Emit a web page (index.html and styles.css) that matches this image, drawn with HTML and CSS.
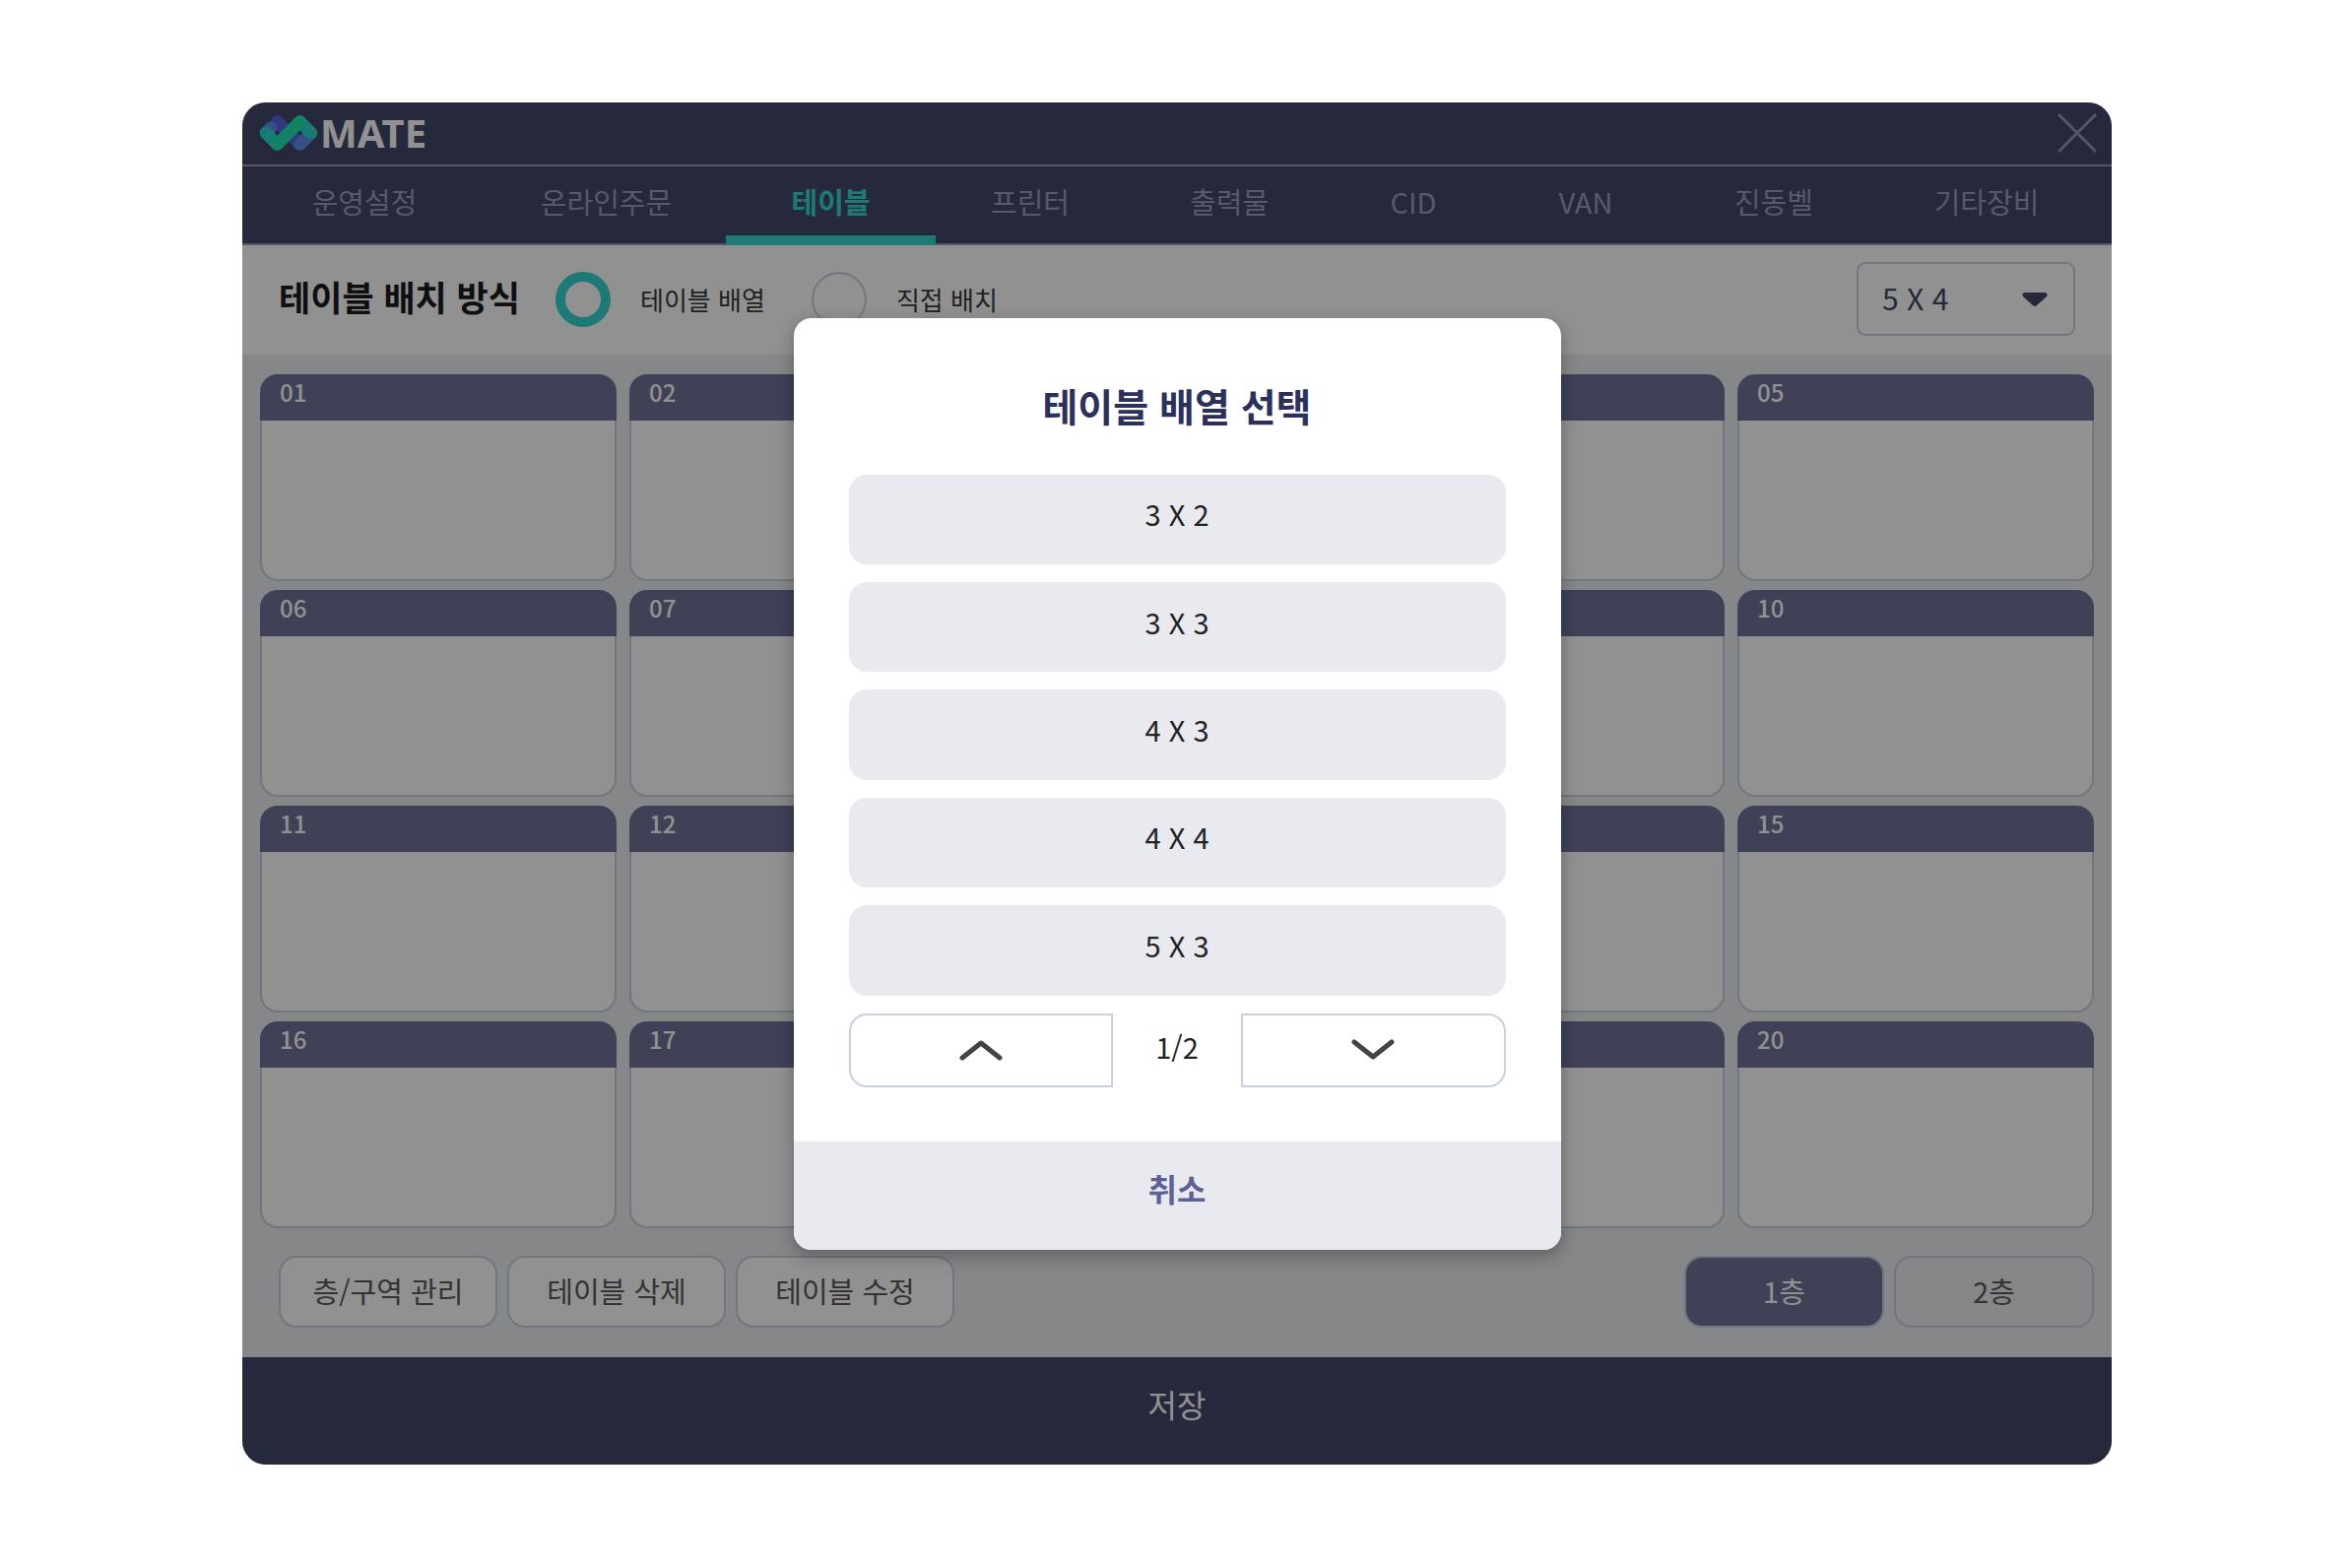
FILE: index.html
```html
<!DOCTYPE html>
<html lang="ko">
<head>
<meta charset="utf-8">
<meta name="viewport" content="width=device-width, initial-scale=1">
<title>MATE</title>
<link rel="stylesheet" href="styles.css">
</head>
<body>
<div class="app">
  <header class="topbar">
    <div class="brand">
      <svg class="brand-mark" viewBox="0 0 60 36" width="60" height="36" fill="none" stroke-width="12.500" stroke-linecap="round" stroke-linejoin="round" aria-hidden="true">
        <path stroke="#5565dd" d="M18.500 6.500 41.500 29.500"/>
        <path stroke="#5d8fee" d="M7 18 12 12.500M41.500 29.500 53 18"/>
        <path stroke="#25d8cc" d="M7 18 18.500 29.500M41.500 6.500 53 18"/>
        <path stroke="#23e5b0" d="M18.500 29.500 41.500 6.500"/>
      </svg>
      <span class="brand-name">MATE</span>
    </div>
    <button class="close" type="button" aria-label="닫기">
      <svg viewBox="0 0 40 40" width="40" height="40" fill="none" stroke="currentColor" stroke-width="3" stroke-linecap="round"><path d="M2 2 38 38M38 2 2 38"/></svg>
    </button>
  </header>
  <nav class="tabs">
    <a class="tab" href="#">운영설정</a>
    <a class="tab" href="#">온라인주문</a>
    <a class="tab tab-active" href="#" aria-current="page">테이블</a>
    <a class="tab" href="#">프린터</a>
    <a class="tab" href="#">출력물</a>
    <a class="tab" href="#">CID</a>
    <a class="tab" href="#">VAN</a>
    <a class="tab" href="#">진동벨</a>
    <a class="tab" href="#">기타장비</a>
  </nav>
  <section class="toolbar">
    <h1 class="toolbar-title">테이블 배치 방식</h1>
    <input class="radio" type="radio" name="layout" id="layout-grid" checked>
    <label class="radio-label" for="layout-grid">테이블 배열</label>
    <input class="radio" type="radio" name="layout" id="layout-free">
    <label class="radio-label" for="layout-free">직접 배치</label>
    <div class="picker">
      <select class="picker-select" aria-label="테이블 배열">
        <option>5 X 4</option>
      </select>
      <svg class="picker-arrow" viewBox="0 0 26 14" width="26" height="14" aria-hidden="true"><path fill="#444869" d="M3 0H23C25.500 0 26.500 2.500 24.500 4.500L15 13C13.800 14.200 12.200 14.200 11 13L1.500 4.500C-.5 2.500 .5 0 3 0Z"/></svg>
    </div>
  </section>
  <main class="floor">
    <div class="tables">
      <article class="seat"><h2 class="seat-no">01</h2></article>
      <article class="seat"><h2 class="seat-no">02</h2></article>
      <article class="seat"><h2 class="seat-no">03</h2></article>
      <article class="seat"><h2 class="seat-no">04</h2></article>
      <article class="seat"><h2 class="seat-no">05</h2></article>
      <article class="seat"><h2 class="seat-no">06</h2></article>
      <article class="seat"><h2 class="seat-no">07</h2></article>
      <article class="seat"><h2 class="seat-no">08</h2></article>
      <article class="seat"><h2 class="seat-no">09</h2></article>
      <article class="seat"><h2 class="seat-no">10</h2></article>
      <article class="seat"><h2 class="seat-no">11</h2></article>
      <article class="seat"><h2 class="seat-no">12</h2></article>
      <article class="seat"><h2 class="seat-no">13</h2></article>
      <article class="seat"><h2 class="seat-no">14</h2></article>
      <article class="seat"><h2 class="seat-no">15</h2></article>
      <article class="seat"><h2 class="seat-no">16</h2></article>
      <article class="seat"><h2 class="seat-no">17</h2></article>
      <article class="seat"><h2 class="seat-no">18</h2></article>
      <article class="seat"><h2 class="seat-no">19</h2></article>
      <article class="seat"><h2 class="seat-no">20</h2></article>
    </div>
    <div class="actions">
      <button class="action" type="button">층/구역 관리</button>
      <button class="action" type="button">테이블 삭제</button>
      <button class="action" type="button">테이블 수정</button>
      <div class="levels">
        <button class="level level-active" type="button">1층</button>
        <button class="level" type="button">2층</button>
      </div>
    </div>
  </main>
  <button class="save" type="button">저장</button>

  <div class="overlay">
    <div class="dialog" role="dialog" aria-modal="true" aria-labelledby="dialog-title">
      <h2 class="dialog-title" id="dialog-title">테이블 배열 선택</h2>
      <div class="choices">
        <button class="choice" type="button">3 X 2</button>
        <button class="choice" type="button">3 X 3</button>
        <button class="choice" type="button">4 X 3</button>
        <button class="choice" type="button">4 X 4</button>
        <button class="choice" type="button">5 X 3</button>
      </div>
      <div class="pager">
        <button class="page page-prev" type="button" aria-label="이전">
          <svg viewBox="0 0 44 22" width="44" height="22" fill="none" stroke="#444" stroke-width="5" stroke-linecap="round" stroke-linejoin="round"><path d="M3 19 22 4 41 19"/></svg>
        </button>
        <span class="page-count">1/2</span>
        <button class="page page-next" type="button" aria-label="다음">
          <svg viewBox="0 0 44 22" width="44" height="22" fill="none" stroke="#444" stroke-width="5" stroke-linecap="round" stroke-linejoin="round"><path d="M3 3 22 18 41 3"/></svg>
        </button>
      </div>
      <button class="cancel" type="button">취소</button>
    </div>
  </div>
</div>
</body>
</html>
```
FILE: styles.css
```css
:root {
  --navy: #444869;
  --violet: #6f729a;
  --line: #c9d0e2;
  --rule: #9299bb;
  --teal: #35d6cf;
  --mist: #e9eaef;
}

* {
  box-sizing: border-box;
}

body {
  margin: 0;
  padding: 104px 244px 104px 246px;
  background: #fff;
  font-family: "Noto Sans CJK KR", sans-serif;
  font-size: 29px;
}

h1,
h2 {
  margin: 0;
}

button,
select {
  padding: 0;
  border: 0;
  background: none;
  color: inherit;
  font: inherit;
  line-height: 44px;
}

svg {
  display: block;
}

.app {
  position: relative;
  display: flex;
  flex-direction: column;
  overflow: hidden;
  border-radius: 24px;
  background: #ebedf0;
}

.topbar {
  display: flex;
  align-items: center;
  justify-content: space-between;
  height: 65px;
  padding: 0 15px 2px 17px;
  border-bottom: 2px solid var(--rule);
  background: var(--navy);
}

.brand {
  display: flex;
  align-items: center;
  gap: 2px;
}

.brand-name {
  color: #fff;
  font-family: "Noto Sans", sans-serif;
  font-size: 40px;
  font-weight: 700;
  line-height: 44px;
}

.close {
  color: var(--rule);
}

.tabs {
  display: grid;
  grid-template-columns: 248fr 243fr 213fr 192fr 212fr 162fr 188fr 194fr 238fr;
  height: 80px;
  padding-right: 8px;
  background: var(--navy);
  box-shadow: inset 0 -2px var(--rule);
}

.tab {
  display: flex;
  align-items: center;
  justify-content: center;
  padding-bottom: 11px;
  color: #979eb9;
  line-height: 44px;
  text-decoration: none;
}

.tab-active {
  color: var(--teal);
  font-weight: 700;
  box-shadow: inset 0 -10px var(--teal);
}

.toolbar {
  display: flex;
  align-items: center;
  height: 111px;
  padding: 0 37px 2px;
  background: #fff;
}

.toolbar-title {
  margin-right: 36px;
  padding-bottom: 6px;
  color: #1c1c1c;
  font-size: 35px;
  line-height: 52px;
}

.radio {
  appearance: none;
  width: 56px;
  height: 56px;
  margin: 0 30px 0 0;
  border: 2px solid var(--line);
  border-radius: 50%;
  background: #fff;
}

.radio:checked {
  border: 10px solid var(--teal);
}

.radio-label {
  margin-right: 47px;
  color: #3a3a3a;
  font-size: 26px;
  line-height: 40px;
}

.picker {
  display: grid;
  align-items: center;
  width: 222px;
  height: 75px;
  margin-left: auto;
}

.picker-select,
.picker-arrow {
  grid-area: 1 / 1;
}

.picker-select {
  appearance: none;
  width: 100%;
  height: 100%;
  padding: 0 64px 4px 24px;
  border: 2px solid var(--line);
  border-radius: 9px;
  color: var(--navy);
  font-size: 30px;
}

.picker-arrow {
  justify-self: end;
  margin-right: 28px;
  pointer-events: none;
}

.floor {
  padding: 20px 18px 30px;
}

.tables {
  display: grid;
  grid-template-columns: repeat(5, 1fr);
  gap: 9px 13px;
}

.seat {
  height: 210px;
  border: 2px solid var(--line);
  border-top: 0;
  border-radius: 18px;
  background: #fff;
}

.seat-no {
  height: 47px;
  margin: 0 -2px;
  padding-left: 20px;
  border-radius: 18px 18px 0 0;
  background: var(--violet);
  color: #fff;
  font-size: 24px;
  font-weight: 500;
  line-height: 36px;
}

.actions {
  display: flex;
  gap: 10px;
  margin-top: 28px;
  padding-left: 19px;
}

.action,
.level {
  height: 73px;
  padding-bottom: 4px;
  border: 2px solid var(--line);
  border-radius: 18px;
  color: #5a5a5a;
}

.action {
  width: 222px;
  background: #fff;
}

.levels {
  display: flex;
  gap: 10px;
  margin-left: auto;
}

.level {
  width: 203px;
}

.level-active {
  background: var(--violet);
  color: #fff;
}

.save {
  height: 109px;
  padding-bottom: 16px;
  background: var(--navy);
  color: #fff;
  font-size: 32px;
}

.overlay {
  position: absolute;
  inset: 0;
  display: flex;
  align-items: center;
  justify-content: center;
  background: rgba(0, 0, 0, 0.43);
}

.dialog {
  display: flex;
  flex-direction: column;
  width: 779px;
  overflow: hidden;
  border-radius: 18px;
  background: #fff;
  box-shadow: 0 6px 18px rgba(0, 0, 0, 0.3);
}

.dialog-title {
  padding: 60px 0 43px;
  color: #2c315b;
  font-size: 39px;
  line-height: 56px;
  text-align: center;
}

.choices {
  display: grid;
  grid-auto-rows: 1fr;
  gap: 18px;
  height: 529px;
  margin: 0 56px 18px;
}

.choice {
  padding-bottom: 12px;
  border-radius: 18px;
  background: var(--mist);
  color: #222;
  font-size: 29px;
}

.pager {
  display: grid;
  grid-template-columns: 1fr 130px 1fr;
  height: 75px;
  margin: 0 56px 55px;
}

.page {
  display: flex;
  align-items: center;
  justify-content: center;
  border: 2px solid var(--line);
}

.page-prev {
  border-radius: 18px 0 0 18px;
}

.page-next {
  border-radius: 0 18px 18px 0;
}

.page-count {
  align-self: center;
  padding-bottom: 8px;
  color: #222;
  font-size: 29px;
  line-height: 44px;
  text-align: center;
}

.cancel {
  height: 110px;
  padding-bottom: 16px;
  background: var(--mist);
  color: #5d6296;
  font-size: 32px;
  font-weight: 700;
}
```
